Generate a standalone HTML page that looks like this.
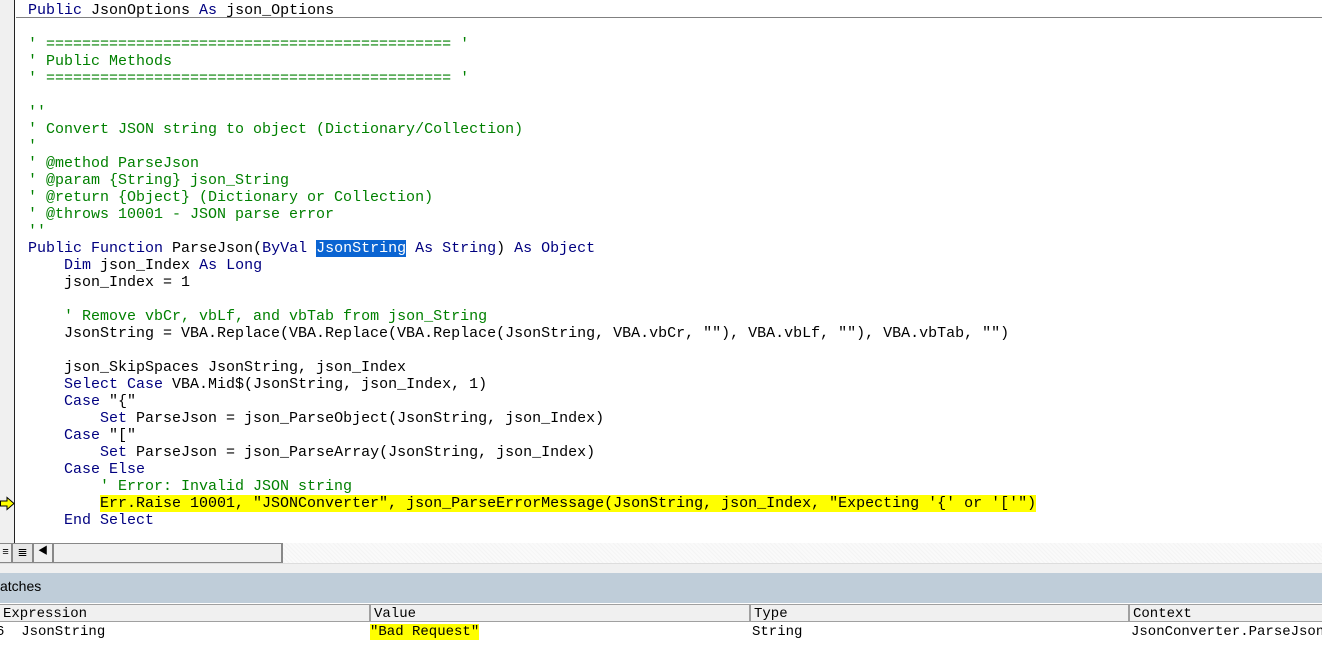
<!DOCTYPE html>
<html><head><meta charset="utf-8">
<style>
*{margin:0;padding:0;box-sizing:border-box}
html,body{width:1322px;height:650px;overflow:hidden;background:#fff;font-family:"Liberation Mono","Noto Sans CJK SC",monospace;}
#code{position:absolute;left:0;top:0;width:1322px;height:543px;background:#fff}
#gutter{position:absolute;left:0;top:0;width:15px;height:543px;background:#f0f0f0;border-right:1px solid #222}
.l{position:absolute;left:28px;height:17px;line-height:17px;font-size:15px;white-space:pre;color:#000}
.k{color:#000080}.c{color:#008000}
.sel{background:#0a64d2;color:#fff}
.hl{background:#ffff00}
#sep{position:absolute;left:16px;top:17px;width:1306px;height:1px;background:#808080}
#tb{position:absolute;left:0;top:543px;width:1322px;height:20px;background:repeating-linear-gradient(45deg,#f4f4f4 0 1px,#fafafa 1px 3px)}
#band{position:absolute;left:0;top:563px;width:1322px;height:10px;background:#f0f0f0;border-top:1px solid #ddd}
#title{position:absolute;left:0;top:573px;width:1322px;height:30px;background:#bfcdd9;font-family:"Liberation Sans",sans-serif;font-size:14px;line-height:22px;padding-left:0}
#hdr{position:absolute;left:0;top:604px;width:1322px;height:18px;background:#f0f0f0;border-top:1px solid #a0a0a0;border-bottom:1px solid #a0a0a0}
.h{position:absolute;top:0;height:17px;line-height:18px;font-size:14px;white-space:pre;padding-left:3px;border-left:2px solid #a0a0a0}
.d{position:absolute;top:623px;height:18px;line-height:18px;font-size:14px;white-space:pre}
</style></head><body>
<div id="code">
<div id="gutter"></div>
<div id="sep"></div>
<div class="l" style="top:2px"><span class="k">Public</span> JsonOptions <span class="k">As</span> json_Options</div>
<div class="l c" style="top:36px">' ============================================= '</div>
<div class="l c" style="top:53px">' Public Methods</div>
<div class="l c" style="top:70px">' ============================================= '</div>
<div class="l c" style="top:104px">''</div>
<div class="l c" style="top:121px">' Convert JSON string to object (Dictionary/Collection)</div>
<div class="l c" style="top:138px">'</div>
<div class="l c" style="top:155px">' @method ParseJson</div>
<div class="l c" style="top:172px">' @param {String} json_String</div>
<div class="l c" style="top:189px">' @return {Object} (Dictionary or Collection)</div>
<div class="l c" style="top:206px">' @throws 10001 - JSON parse error</div>
<div class="l c" style="top:223px">''</div>
<div class="l" style="top:240px"><span class="k">Public Function</span> ParseJson(<span class="k">ByVal</span> <span class="sel">JsonString</span> <span class="k">As String</span>) <span class="k">As Object</span></div>
<div class="l" style="top:257px">    <span class="k">Dim</span> json_Index <span class="k">As Long</span></div>
<div class="l" style="top:274px">    json_Index = 1</div>
<div class="l" style="top:308px">    <span class="c">' Remove vbCr, vbLf, and vbTab from json_String</span></div>
<div class="l" style="top:325px">    JsonString = VBA.Replace(VBA.Replace(VBA.Replace(JsonString, VBA.vbCr, ""), VBA.vbLf, ""), VBA.vbTab, "")</div>
<div class="l" style="top:359px">    json_SkipSpaces JsonString, json_Index</div>
<div class="l" style="top:376px">    <span class="k">Select Case</span> VBA.Mid$(JsonString, json_Index, 1)</div>
<div class="l" style="top:393px">    <span class="k">Case</span> "{"</div>
<div class="l" style="top:410px">        <span class="k">Set</span> ParseJson = json_ParseObject(JsonString, json_Index)</div>
<div class="l" style="top:427px">    <span class="k">Case</span> "["</div>
<div class="l" style="top:444px">        <span class="k">Set</span> ParseJson = json_ParseArray(JsonString, json_Index)</div>
<div class="l" style="top:461px">    <span class="k">Case Else</span></div>
<div class="l c" style="top:478px">        ' Error: Invalid JSON string</div>
<div class="l" style="top:495px">        <span class="hl">Err.Raise 10001, "JSONConverter", json_ParseErrorMessage(JsonString, json_Index, "Expecting '{' or '['")</span></div>
<div class="l" style="top:512px">    <span class="k">End Select</span></div>
<svg style="position:absolute;left:0;top:496px" width="15" height="15" viewBox="0 0 15 15"><path d="M0.5 5 H7 V1.5 L14 7.5 L7 13.5 V10 H0.5 Z" fill="#ffff00" stroke="#000" stroke-width="1"/></svg>
</div>
<div id="tb">
 <div style="position:absolute;left:0;top:0;width:12px;height:20px;background:#f0f0f0;border:1px solid #888;border-left:none;font-size:11px;line-height:18px;text-align:center">≡</div>
 <div style="position:absolute;left:12px;top:0;width:21px;height:20px;background:#e6e6e6;border:1px solid #888;font-size:12px;line-height:18px;text-align:center">≣</div>
 <div style="position:absolute;left:33px;top:0;width:20px;height:20px;background:#f0f0f0;border:1px solid #888;font-size:10px;line-height:18px;text-align:center">◀</div>
 <div style="position:absolute;left:53px;top:0;width:230px;height:20px;background:#f0f0f0;border:1px solid #888;border-right:2px solid #888"></div>
</div>
<div id="band"></div>
<div id="title"><span style="position:absolute;left:0;top:2px">atches</span></div>
<div id="hdr">
 <div class="h" style="left:-2px;width:371px">Expression</div>
 <div class="h" style="left:369px;width:380px">Value</div>
 <div class="h" style="left:749px;width:380px">Type</div>
 <div class="h" style="left:1128px;width:200px">Context</div>
</div>
<div class="d" style="left:-4px">6  JsonString</div>
<div class="d" style="left:370px"><span class="hl">"Bad Request"</span></div>
<div class="d" style="left:752px">String</div>
<div class="d" style="left:1131px">JsonConverter.ParseJson</div>
</body></html>
